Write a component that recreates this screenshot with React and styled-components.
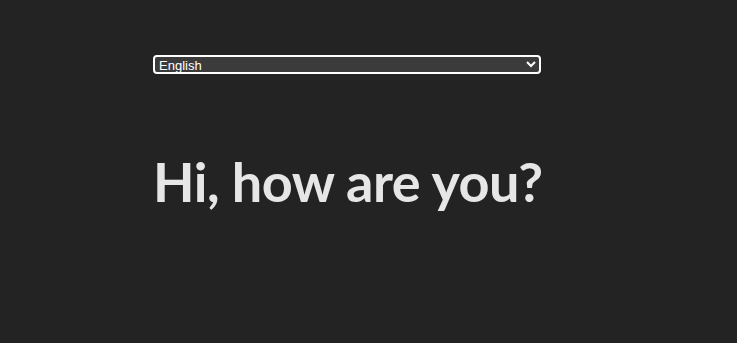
import React from "react";
import styled, { createGlobalStyle } from "styled-components";

const Global = createGlobalStyle`
  html, body { margin: 0; padding: 0; background: #232323; }
  body { font-family: "Liberation Sans", Arial, sans-serif; }
`;

const Page = styled.main`
  min-height: 343px;
  box-sizing: border-box;
  padding: 55px 0 0 153px;
  display: flex;
  flex-direction: column;
  align-items: flex-start;
`;

const LangSelect = styled.select`
  color-scheme: dark;
  width: 388px;
  height: 19px;
  box-sizing: border-box;
  background: #3b3b3b;
  color: #ffffff;
  border: 2px solid #ffffff;
  border-radius: 4px;
  font-family: "Liberation Sans", Arial, sans-serif;
  font-size: 13px;
  line-height: 15px;
  padding: 0;
  outline: none;
`;

const Heading = styled.h1`
  margin: 78px 0 0 0;
  font-family: Lato, sans-serif;
  font-weight: 700;
  font-size: 54px;
  line-height: 60px;
  color: #e6e6e6;
  letter-spacing: -0.5px;
`;

export default function App() {
  return (
    <>
      <Global />
      <Page>
        <LangSelect defaultValue="en">
          <option value="en">English</option>
          <option value="es">Español</option>
          <option value="fr">Français</option>
        </LangSelect>
        <Heading>Hi, how are you?</Heading>
      </Page>
    </>
  );
}
